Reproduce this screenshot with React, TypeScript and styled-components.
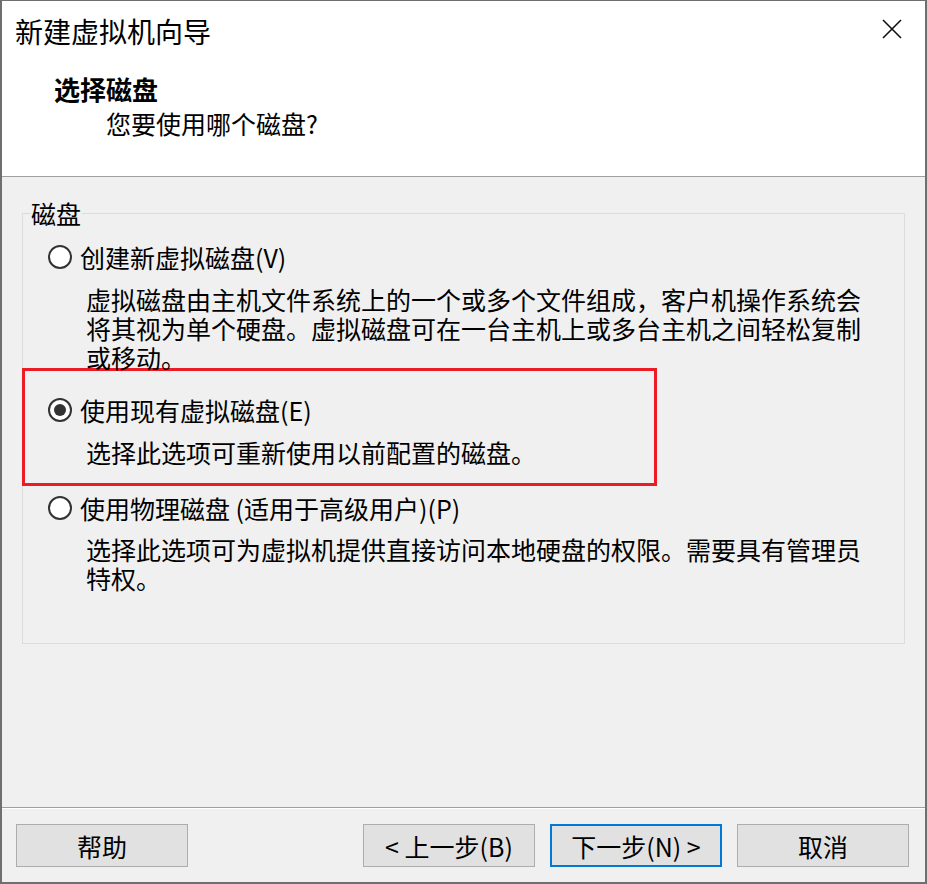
import React from "react";
import styled, { createGlobalStyle } from "styled-components";

const GlobalStyle = createGlobalStyle`
  html, body { margin: 0; padding: 0; background: #f0f0f0; }
  body { font-family: "Noto Sans CJK SC", "Noto Sans", sans-serif; color: #000; }
  * { box-sizing: border-box; }
`;

const Window = styled.div`
  width: 927px;
  height: 884px;
  display: flex;
  flex-direction: column;
  border: 2px solid #6f6f6f;
  border-top-width: 1px;
  background: #f0f0f0;
`;

const Header = styled.header`
  height: 176px;
  flex: none;
  background: #ffffff;
  border-bottom: 1px solid #a0a0a0;
  padding-top: 12px;
`;

const TitleRow = styled.div`
  display: flex;
  justify-content: space-between;
  align-items: flex-start;
  padding-left: 13px;
  padding-right: 23px;
`;

const Title = styled.div`
  font-size: 28px;
  line-height: 36px;
  font-weight: 400;
`;

const CloseIcon = styled.svg`
  margin-top: 6px;
  width: 20px;
  height: 20px;
  display: block;
`;

const Heading = styled.div`
  margin-top: 23px;
  padding-left: 52px;
  font-size: 26px;
  line-height: 34px;
  font-weight: 700;
`;

const SubHeading = styled.div`
  padding-left: 104px;
  font-size: 25px;
  line-height: 34px;
`;

const Body = styled.main`
  flex: 1;
  padding: 21px 20px 0 20px;
`;

const GroupBox = styled.fieldset`
  margin: 0;
  height: 446px;
  border: 1px solid #dcdcdc;
  padding: 0 0 0 8px;
  min-width: 0;
`;

const Legend = styled.legend`
  padding: 0 1px 0 0;
  font-size: 25px;
  line-height: 30px;
`;

const Option = styled.div<{ $top: number }>`
  margin-top: ${(p) => p.$top}px;
`;

const RadioRow = styled.label`
  display: flex;
  align-items: center;
  height: 30px;
  padding-left: 17px;
  gap: 8px;
  font-size: 25px;
`;

const Radio = styled.span<{ $checked?: boolean }>`
  width: 24px;
  height: 24px;
  flex: none;
  border-radius: 50%;
  border: 2px solid #333333;
  background: #ffffff;
  display: flex;
  align-items: center;
  justify-content: center;
  &::after {
    content: "";
    width: 12px;
    height: 12px;
    border-radius: 50%;
    background: ${(p) => (p.$checked ? "#333333" : "transparent")};
  }
`;

const Description = styled.p<{ $top: number }>`
  margin: ${(p) => p.$top}px 0 0 0;
  padding-left: 55px;
  padding-right: 40px;
  font-size: 25px;
  line-height: 29px;
`;

const Highlight = styled.div`
  margin-top: -4px;
  margin-left: -9px;
  width: 635px;
  height: 118px;
  border: 3px solid #ec1c24;
  padding: 24px 0 0 6px;
`;

const Footer = styled.footer`
  flex: none;
  height: 75px;
  border-top: 1px solid #a0a0a0;
  box-shadow: inset 0 1px 0 #ffffff;
  display: flex;
  align-items: flex-start;
  padding: 16px 16px 0 14px;
  gap: 15px;
`;

const Spacer = styled.div`
  flex: 1;
`;

const Button = styled.button<{ $primary?: boolean }>`
  width: 172px;
  height: 43px;
  background: #e1e1e1;
  border: ${(p) => (p.$primary ? "2px solid #0078d7" : "1px solid #adadad")};
  font-family: "Noto Sans CJK SC", "Noto Sans", sans-serif;
  font-size: 25px;
  line-height: 30px;
  color: #000;
  padding: 0;
  display: flex;
  align-items: center;
  justify-content: center;
`;

export default function App() {
  return (
    <>
      <GlobalStyle />
      <Window>
        <Header>
          <TitleRow>
            <Title>新建虚拟机向导</Title>
            <CloseIcon viewBox="0 0 20 20">
              <path d="M1 1 L19 19 M19 1 L1 19" stroke="#111" strokeWidth="1.6" fill="none" />
            </CloseIcon>
          </TitleRow>
          <Heading>选择磁盘</Heading>
          <SubHeading>您要使用哪个磁盘?</SubHeading>
        </Header>
        <Body>
          <GroupBox>
            <Legend>磁盘</Legend>
            <Option $top={14}>
              <RadioRow>
                <Radio />
                创建新虚拟磁盘(V)
              </RadioRow>
              <Description $top={13}>
                虚拟磁盘由主机文件系统上的一个或多个文件组成，客户机操作系统会将其视为单个硬盘。虚拟磁盘可在一台主机上或多台主机之间轻松复制或移动。
              </Description>
            </Option>
            <Highlight>
              <RadioRow>
                <Radio $checked />
                使用现有虚拟磁盘(E)
              </RadioRow>
              <Description $top={13}>选择此选项可重新使用以前配置的磁盘。</Description>
            </Highlight>
            <Option $top={7}>
              <RadioRow>
                <Radio />
                使用物理磁盘 (适用于高级用户)(P)
              </RadioRow>
              <Description $top={12}>
                选择此选项可为虚拟机提供直接访问本地硬盘的权限。需要具有管理员特权。
              </Description>
            </Option>
          </GroupBox>
        </Body>
        <Footer>
          <Button>帮助</Button>
          <Spacer />
          <Button>&lt; 上一步(B)</Button>
          <Button $primary>下一步(N) &gt;</Button>
          <Button>取消</Button>
        </Footer>
      </Window>
    </>
  );
}
